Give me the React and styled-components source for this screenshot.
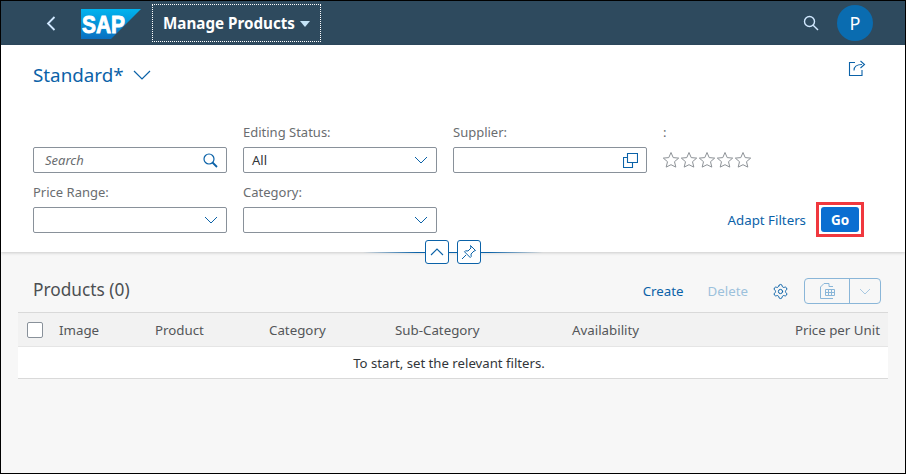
import React from "react";
import styled, { createGlobalStyle } from "styled-components";
import { Settings } from "lucide-react";

const Global = createGlobalStyle`
  html, body { margin: 0; padding: 0; background: #fff; }
  * { box-sizing: border-box; }
`;

/* ================= PAGE ================= */

const Page = styled.div`
  width: 906px;
  height: 474px;
  border: 1px solid #000;
  background: #f7f7f7;
  font-family: "Noto Sans", "Liberation Sans", Arial, sans-serif;
  font-size: 14px;
  color: #32363a;
  display: flex;
  flex-direction: column;
  overflow: hidden;
`;

/* ================= SHELL ================= */

const Shell = styled.header`
  height: 44px;
  flex: none;
  background: #2e4a5e;
  display: flex;
  align-items: center;
  padding-left: 45px;
  padding-right: 32px;
`;

const BackIcon = styled.svg`
  width: 11px;
  height: 15px;
  margin-right: 24px;
`;

const Logo = styled.svg`
  width: 60px;
  height: 30px;
  margin-top: 2px;
  margin-right: 11px;
`;

const AppTitle = styled.div`
  width: 169px;
  height: 38px;
  border: 1px dotted #fff;
  display: flex;
  align-items: center;
  padding-left: 10px;
  gap: 5px;
  color: #fff;
  font-size: 15.2px;
  font-weight: 700;
`;

const Caret = styled.span`
  width: 0;
  height: 0;
  border-left: 5px solid transparent;
  border-right: 5px solid transparent;
  border-top: 6px solid #c5e4f8;
  margin-top: 2px;
`;

const ShellSearch = styled.svg`
  width: 16px;
  height: 16px;
  margin-left: auto;
  margin-right: 18px;
`;

const Avatar = styled.div`
  width: 36px;
  height: 36px;
  border-radius: 50%;
  background: #0a6cb0;
  color: #fff;
  font-size: 18px;
  display: flex;
  align-items: center;
  justify-content: center;
`;

/* ================= FILTER BAR ================= */

const FilterPanel = styled.section`
  position: relative;
  flex: none;
  height: 207px;
  background: #fff;
  box-shadow: 0 1px 3px rgba(0, 0, 0, 0.18);
  padding: 0 40px 0 32px;
  z-index: 1;
`;

const VariantRow = styled.div`
  height: 60px;
  display: flex;
  align-items: center;
  gap: 9px;
  color: #0b62a8;
  font-size: 18.8px;
`;

const ShareIcon = styled.svg`
  width: 18px;
  height: 18px;
  margin-left: auto;
  margin-top: -14px;
  margin-right: -1px;
`;

const FilterGrid = styled.div`
  display: grid;
  grid-template-columns: repeat(3, 194px) 1fr;
  column-gap: 16px;
  row-gap: 4px;
  margin-top: 12px;
`;

const Field = styled.div`
  height: 56px;
  display: flex;
  flex-direction: column;
  justify-content: flex-end;
`;

const Label = styled.label`
  height: 24px;
  font-size: 13px;
  color: #6a6d70;
`;

const Input = styled.div`
  height: 26px;
  border: 1px solid #89919a;
  border-radius: 2px;
  background: #fff;
  display: flex;
  align-items: center;
  justify-content: space-between;
  padding: 0 8px 0 ${({ $italic }) => ($italic ? "11px" : "8px")};
  font-size: 13px;
  font-style: ${({ $italic }) => ($italic ? "italic" : "normal")};
  color: ${({ $italic }) => ($italic ? "#6a6d70" : "#32363a")};
`;

const Stars = styled.div`
  height: 26px;
  margin-left: -1px;
  display: flex;
  align-items: center;
`;

const Actions = styled.div`
  grid-column: 3 / 5;
  align-self: end;
  margin-bottom: -4px;
  margin-right: 1px;
  display: flex;
  justify-content: flex-end;
  align-items: center;
  gap: 10px;
`;

const LinkButton = styled.span`
  color: ${({ $disabled }) => ($disabled ? "#9cc1dc" : "#0b62a8")};
  font-size: 13.3px;
`;

const Highlight = styled.div`
  border: 3px solid #f0383e;
  padding: 2px;
  display: flex;
`;

const GoButton = styled.button`
  width: 38px;
  height: 25px;
  border: 0;
  border-radius: 3px;
  padding: 0;
  background: #0a6ed1;
  color: #fff;
  font-family: inherit;
  font-size: 13.5px;
  font-weight: 700;
`;

/* sits on the seam between the filter bar and the table area */
const Collapse = styled.div`
  position: absolute;
  left: 362px;
  bottom: -12px;
  width: 180px;
  height: 24px;
  display: flex;
  align-items: center;
  justify-content: center;
  gap: 8px;
  background: linear-gradient(
      to right,
      rgba(11, 98, 168, 0),
      #0b62a8 30%,
      #0b62a8 70%,
      rgba(11, 98, 168, 0)
    )
    center / 100% 1px no-repeat;
`;

const CollapseButton = styled.div`
  width: 24px;
  height: 24px;
  border: 1px solid #0b62a8;
  border-radius: 3px;
  background: #fff;
  display: flex;
  align-items: center;
  justify-content: center;
`;

/* ================= TABLE ================= */

const Content = styled.main`
  flex: 1;
  padding: 0 17px;
`;

const TableBar = styled.div`
  height: 60px;
  display: flex;
  align-items: center;
  padding: 18px 7px 0 15px;
`;

const TableTitle = styled.h2`
  margin: -4px 0 0;
  font-size: 17.3px;
  font-weight: 400;
  color: #4c4f52;
`;

const TableTools = styled.div`
  margin-left: auto;
  display: flex;
  align-items: center;
  gap: 24px;
`;

const SplitButton = styled.div`
  width: 77px;
  height: 26px;
  border: 1px solid #8ab6d8;
  border-radius: 4px;
  display: flex;
  margin-left: -9px;
`;

const SplitPart = styled.div`
  flex: ${({ $grow }) => ($grow ? 1 : "none")};
  width: 31px;
  display: flex;
  align-items: center;
  justify-content: center;
  & + & {
    border-left: 1px solid #8ab6d8;
  }
`;

const Table = styled.div`
  border-top: 1px solid #d9d9d9;
  border-bottom: 1px solid #d9d9d9;
`;

const HeadRow = styled.div`
  height: 34px;
  background: #f2f2f2;
  border-bottom: 1px solid #e5e5e5;
  display: grid;
  grid-template-columns: 33px 96px 114px 126px 177px 160px 1fr;
  align-items: center;
  font-size: 13.3px;
  color: #545659;
`;

const HeadCell = styled.div`
  padding: 0 8px;
  white-space: nowrap;
  text-align: ${({ $right }) => ($right ? "right" : "left")};
`;

const Checkbox = styled.span`
  display: block;
  width: 16px;
  height: 16px;
  margin-left: 9px;
  background: #fff;
  border: 1px solid #89919a;
  border-radius: 2px;
`;

const EmptyRow = styled.div`
  height: 31px;
  padding-right: 8px;
  background: #fff;
  display: flex;
  align-items: center;
  justify-content: center;
  font-size: 13.2px;
`;

/* ================= ICONS ================= */

const Chevron = () => (
  <svg width="14" height="8" viewBox="0 0 14 8" fill="none" stroke="#0b62a8" strokeWidth="1">
    <path d="M1 1l6 6 6-6" />
  </svg>
);

const Star = () => (
  <svg width="18" height="18" viewBox="0 0 18 18" fill="none" stroke="#8d9297" strokeWidth="1">
    <path d="M9 1.5l2.2 5.1 5.5.5-4.2 3.6 1.3 5.4L9 13.7l-4.8 2.4 1.3-5.4-4.2-3.6 5.5-.5z" />
  </svg>
);

const App = () => (
  <>
    <Global />
    <Page>
      <Shell>
        <BackIcon viewBox="0 0 11 15" fill="none" stroke="#d1e8ff" strokeWidth="1.8">
          <path d="M8.5 1L2 7.5 8.5 14" />
        </BackIcon>
        <Logo viewBox="0 0 60 30">
          <defs>
            <linearGradient id="sapBlue" x1="0" y1="0" x2="0" y2="1">
              <stop offset="0" stopColor="#00b4ef" />
              <stop offset="1" stopColor="#0a6fc0" />
            </linearGradient>
          </defs>
          <path d="M0 0h60L30 30H0z" fill="url(#sapBlue)" />
          <text
            x="1"
            y="24"
            fill="#fff"
            stroke="#fff"
            strokeWidth="0.9"
            fontFamily="Liberation Sans"
            fontWeight="700"
            fontSize="24"
            textLength="43"
            lengthAdjust="spacingAndGlyphs"
          >
            SAP
          </text>
        </Logo>
        <AppTitle>
          Manage Products
          <Caret />
        </AppTitle>
        <ShellSearch viewBox="0 0 16 16" fill="none" stroke="#d1e8ff" strokeWidth="1.4">
          <circle cx="6.5" cy="6.5" r="5" />
          <path d="M10.2 10.2L15 15" />
        </ShellSearch>
        <Avatar>P</Avatar>
      </Shell>

      <FilterPanel>
        <VariantRow>
          Standard*
          <svg width="18" height="10" viewBox="0 0 18 10" fill="none" stroke="#0b62a8" strokeWidth="1.2">
            <path d="M1 1l8 8 8-8" />
          </svg>
          <ShareIcon viewBox="0 0 18 18" fill="none" stroke="#0b62a8" strokeWidth="1.1">
            <path d="M7 3.5H1.5v13h12.5V11" />
            <path d="M6 11.5c0-4 3-6 8-6M12.5 2l4 3.5-4 3.5" />
          </ShareIcon>
        </VariantRow>

        <FilterGrid>
          <Field>
            <Input $italic>
              Search
              <svg width="15" height="15" viewBox="0 0 15 15" fill="none" stroke="#0b62a8" strokeWidth="1.2">
                <circle cx="6" cy="6" r="5" />
                <path d="M9.5 9.5L14 14" strokeWidth="1.8" />
              </svg>
            </Input>
          </Field>
          <Field>
            <Label>Editing Status:</Label>
            <Input>
              All
              <Chevron />
            </Input>
          </Field>
          <Field>
            <Label>Supplier:</Label>
            <Input>
              <span />
              <svg width="15" height="15" viewBox="0 0 15 15" fill="none" stroke="#0b62a8" strokeWidth="1.1">
                <path d="M4.5.5h10v9h-10z" />
                <path d="M4.5 4.5h-4v10h9v-5" />
              </svg>
            </Input>
          </Field>
          <Field>
            <Label>:</Label>
            <Stars>
              <Star />
              <Star />
              <Star />
              <Star />
              <Star />
            </Stars>
          </Field>
          <Field>
            <Label>Price Range:</Label>
            <Input>
              <span />
              <Chevron />
            </Input>
          </Field>
          <Field>
            <Label>Category:</Label>
            <Input>
              <span />
              <Chevron />
            </Input>
          </Field>
          <Actions>
            <LinkButton>Adapt Filters</LinkButton>
            <Highlight>
              <GoButton>Go</GoButton>
            </Highlight>
          </Actions>
        </FilterGrid>

        <Collapse>
          <CollapseButton>
            <svg width="14" height="8" viewBox="0 0 14 8" fill="none" stroke="#0b62a8" strokeWidth="1.1">
              <path d="M1 7l6-6 6 6" />
            </svg>
          </CollapseButton>
          <CollapseButton>
            <svg width="16" height="16" viewBox="0 0 16 16" fill="none" stroke="#0b62a8" strokeWidth="1">
              <path d="M9.5 1.5l5 5-1.5.5-3 3 .2 2.5-1 1-5.7-5.7 1-1 2.5.2 3-3z" />
              <path d="M5 11l-4 4" />
            </svg>
          </CollapseButton>
        </Collapse>
      </FilterPanel>

      <Content>
        <TableBar>
          <TableTitle>Products (0)</TableTitle>
          <TableTools>
            <LinkButton>Create</LinkButton>
            <LinkButton $disabled>Delete</LinkButton>
            <Settings size={17} color="#0b62a8" strokeWidth={1.4} />
            <SplitButton>
              <SplitPart $grow>
                <svg width="18" height="18" viewBox="0 0 18 18" fill="none" stroke="#8ab6d8" strokeWidth="1">
                  <path d="M6 1.5h5v3H15M6 1.5L2.5 5v11.5H15" />
                  <path d="M7.5 7.5h9v6h-9zM7.5 10.5h9M10.5 7.5v6M13.5 7.5v6" />
                </svg>
              </SplitPart>
              <SplitPart>
                <svg width="12" height="7" viewBox="0 0 12 7" fill="none" stroke="#a9c9e2" strokeWidth="1">
                  <path d="M1 1l5 5 5-5" />
                </svg>
              </SplitPart>
            </SplitButton>
          </TableTools>
        </TableBar>

        <Table>
          <HeadRow>
            <Checkbox />
            <HeadCell>Image</HeadCell>
            <HeadCell>Product</HeadCell>
            <HeadCell>Category</HeadCell>
            <HeadCell>Sub-Category</HeadCell>
            <HeadCell>Availability</HeadCell>
            <HeadCell $right>Price per Unit</HeadCell>
          </HeadRow>
          <EmptyRow>To start, set the relevant filters.</EmptyRow>
        </Table>
      </Content>
    </Page>
  </>
);

export default App;
